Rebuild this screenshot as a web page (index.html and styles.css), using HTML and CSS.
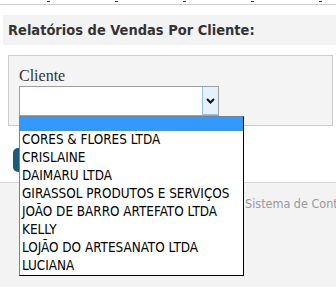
FILE: index.html
```html
<!DOCTYPE html>
<html>
<head>
    <meta charset="utf-8">
    <title>Relatórios de Vendas Por Cliente</title>
    <link rel="stylesheet" href="styles.css">
</head>
<body>

    <!-- Top menu (links cut off above the window) -->
    <div class="top-nav">
        <a href="#"></a>
        <a href="#"></a>
        <a href="#"></a>
        <a href="#"></a>
        <a href="#"></a>
    </div>

    <h2 class="page-title">Relatórios de Vendas Por Cliente:</h2>

    <div class="filter-box">
        <label class="field-label">Cliente</label>
        <div class="fake-select">
            <span class="select-value"></span>
            <span class="select-arrow">
                <svg width="9" height="6" viewBox="0 0 9 6"><path d="M1 1 L4.5 4.5 L8 1" fill="none" stroke="#111" stroke-width="2"/></svg>
            </span>
        </div>
    </div>

    <!-- covered by the open list -->
    <button class="btn-gerar"></button>

    <div id="footer">
        <span class="footer-text">Sistema de Controle de Vendas</span>
    </div>

    <!-- Open dropdown list -->
    <ul class="select-list">
        <li class="selected"></li>
        <li>CORES &amp; FLORES LTDA</li>
        <li>CRISLAINE</li>
        <li>DAIMARU LTDA</li>
        <li>GIRASSOL PRODUTOS E SERVIÇOS</li>
        <li>JOÃO DE BARRO ARTEFATO LTDA</li>
        <li>KELLY</li>
        <li>LOJÃO DO ARTESANATO LTDA</li>
        <li>LUCIANA</li>
    </ul>

</body>
</html>
```

FILE: styles.css
```css
html, body {
    height: 100%;
}
body {
    margin: 0;
    padding: 0;
    background-color: #fff;
    font-family: "DejaVu Sans Condensed", "DejaVu Sans", sans-serif;
    position: relative;
    display: flex;
    flex-direction: column;
    overflow: hidden;
}
.top-nav {
    height: 4px;
    border-bottom: 1px solid #ccc;
    display: flex;
    gap: 65px;
    padding-left: 47px;
}
.top-nav a {
    display: block;
    width: 3px;
    height: 1px;
    margin-top: 1px;
    background-color: #551a8b;
}
.page-title {
    margin: 10px 0 10px 3px;
    height: 30px;
    line-height: 30px;
    padding-left: 5px;
    background-color: #f3f3f3;
    font-size: 14.5px;
    font-weight: bold;
    color: #333;
}
.filter-box {
    margin: 0 3px 0 8px;
    border: 1px solid #ccc;
    background-color: #f4f4f4;
    padding: 10px 10px 9px;
}
.field-label {
    display: block;
    height: 20px;
    line-height: 20px;
    font-family: "Liberation Serif", serif;
    font-size: 16px;
    color: #333;
}
.fake-select {
    width: 198px;
    height: 28px;
    border: 1px solid #a0a0a0;
    background-color: #fff;
    display: flex;
    justify-content: flex-end;
}
.select-arrow {
    width: 15px;
    border: 1px solid #99c2ea;
    border-top: 0;
    border-right: 0;
    background-color: #e5f1fb;
    display: flex;
    align-items: center;
    justify-content: center;
}
.btn-gerar {
    margin: 22px 0 0 13px;
    width: 90px;
    height: 24px;
    border: 0;
    border-radius: 5px;
    background-color: #1d5a7b;
}
#footer {
    margin-top: 10px;
    flex: 1;
    border-top: 1px solid #d6d6d6;
    background-color: #f3f3f3;
    padding: 10px 0 0 245px;
    white-space: nowrap;
    overflow: hidden;
}
.footer-text {
    font-size: 12.5px;
    color: #999;
}
.select-list {
    position: absolute;
    left: 19px;
    top: 116px;
    width: 223px;
    margin: 0;
    padding: 0;
    list-style: none;
    background-color: #fff;
    border: 1px solid #000;
    border-left-color: #808080;
    border-top-color: #808080;
}
.select-list li {
    height: 18px;
    line-height: 18px;
    padding-left: 2px;
    font-size: 13.4px;
    color: #000;
    white-space: nowrap;
}
.select-list li.selected {
    height: 14px;
    background-color: #3399ff;
}
```
